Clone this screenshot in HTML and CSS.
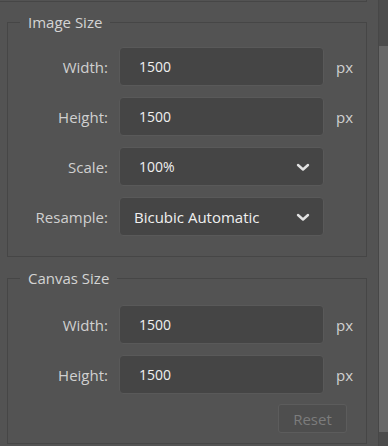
FILE: index.html
```html
<!DOCTYPE html>
<html lang="en">
<head>
    <meta charset="UTF-8">
    <meta name="viewport" content="width=device-width, initial-scale=1.0">
    <title>Image Size</title>
    <link rel="stylesheet" href="styles.css">
</head>
<body>
    <div class="panel">
        <div class="prev-edge"></div>

        <fieldset class="group">
            <legend>Image Size</legend>
            <div class="rows">
                <label class="label" for="img-w">Width:</label>
                <input class="field" id="img-w" type="text" value="1500">
                <span class="unit">px</span>

                <label class="label" for="img-h">Height:</label>
                <input class="field" id="img-h" type="text" value="1500">
                <span class="unit">px</span>

                <label class="label" for="scale">Scale:</label>
                <div class="select-wrap">
                    <select class="field select" id="scale">
                        <option>100%</option>
                    </select>
                    <svg class="chevron" width="14" height="9" viewBox="0 0 14 9"><path d="M2 2 L7 6.5 L12 2" fill="none" stroke="#e2e2e2" stroke-width="2.4" stroke-linecap="round" stroke-linejoin="round"/></svg>
                </div>
                <span></span>

                <label class="label" for="resample">Resample:</label>
                <div class="select-wrap">
                    <select class="field select wide" id="resample">
                        <option>Bicubic Automatic</option>
                    </select>
                    <svg class="chevron" width="14" height="9" viewBox="0 0 14 9"><path d="M2 2 L7 6.5 L12 2" fill="none" stroke="#e2e2e2" stroke-width="2.4" stroke-linecap="round" stroke-linejoin="round"/></svg>
                </div>
                <span></span>
            </div>
        </fieldset>

        <fieldset class="group canvas">
            <legend>Canvas Size</legend>
            <div class="rows">
                <label class="label" for="cv-w">Width:</label>
                <input class="field" id="cv-w" type="text" value="1500">
                <span class="unit">px</span>

                <label class="label" for="cv-h">Height:</label>
                <input class="field" id="cv-h" type="text" value="1500">
                <span class="unit">px</span>
            </div>
            <div class="actions">
                <button class="reset" disabled>Reset</button>
            </div>
        </fieldset>
    </div>

    <div class="gutter"></div>
    <div class="track">
        <div class="thumb"></div>
    </div>
</body>
</html>
```

FILE: styles.css
```css
html, body {
    height: 100%;
}
body {
    margin: 0;
    display: flex;
    background: #535353;
    font-family: 'Open Sans', 'Segoe UI', sans-serif;
    font-size: 14px;
    color: #d2d2d2;
    overflow: hidden;
}
.panel {
    width: 367px;
    flex: none;
}
.prev-edge {
    height: 1px;
    border-bottom: 1px solid #464646;
    border-right: 1px solid #464646;
}
.group {
    margin: 10px 0 0 7px;
    width: 360px;
    box-sizing: border-box;
    padding: 0 0 20px 0;
    border: 1px solid #464646;
    border-radius: 0;
    min-width: 0;
}
.group legend {
    margin-left: 12px;
    padding: 0 8px;
    line-height: 20px;
    font-size: 15px;
    color: #d4d4d4;
}
.canvas {
    margin-top: 11px;
    padding-bottom: 10px;
}
.rows {
    display: grid;
    grid-template-columns: 100px 205px auto;
    column-gap: 11px;
    row-gap: 11px;
    align-items: center;
    padding-top: 15px;
}
.canvas .rows {
    padding-top: 17px;
}
.label {
    text-align: right;
    font-size: 15px;
    color: #d0d0d0;
}
.unit {
    font-size: 15px;
    color: #d0d0d0;
    padding-left: 1px;
}
.field {
    box-sizing: border-box;
    width: 205px;
    height: 39px;
    margin: 0;
    padding: 0 0 0 19px;
    background: #454545;
    border: 1px solid #595959;
    border-radius: 4px;
    font-family: inherit;
    font-size: 14px;
    color: #f0f0f0;
    outline: none;
}
.select-wrap {
    position: relative;
    width: 205px;
    height: 39px;
}
.select {
    appearance: none;
    -webkit-appearance: none;
}
.select.wide {
    padding-left: 14px;
    font-size: 15px;
}
.chevron {
    position: absolute;
    right: 14px;
    top: 16px;
    pointer-events: none;
}
.actions {
    display: flex;
    justify-content: flex-end;
    padding: 10px 19px 0 0;
}
.reset {
    width: 69px;
    height: 29px;
    padding: 0;
    background: #4e4e4e;
    border: 1px solid #5c5c5c;
    border-radius: 3px;
    font-family: inherit;
    font-size: 15px;
    color: #7c7c7c;
}
.gutter {
    width: 11px;
    flex: none;
}
.track {
    flex: 1;
    border-left: 1px solid #474747;
    background: #4c4c4c;
    padding-top: 46px;
    box-sizing: border-box;
}
.thumb {
    height: 386px;
    background: #686868;
}
```
